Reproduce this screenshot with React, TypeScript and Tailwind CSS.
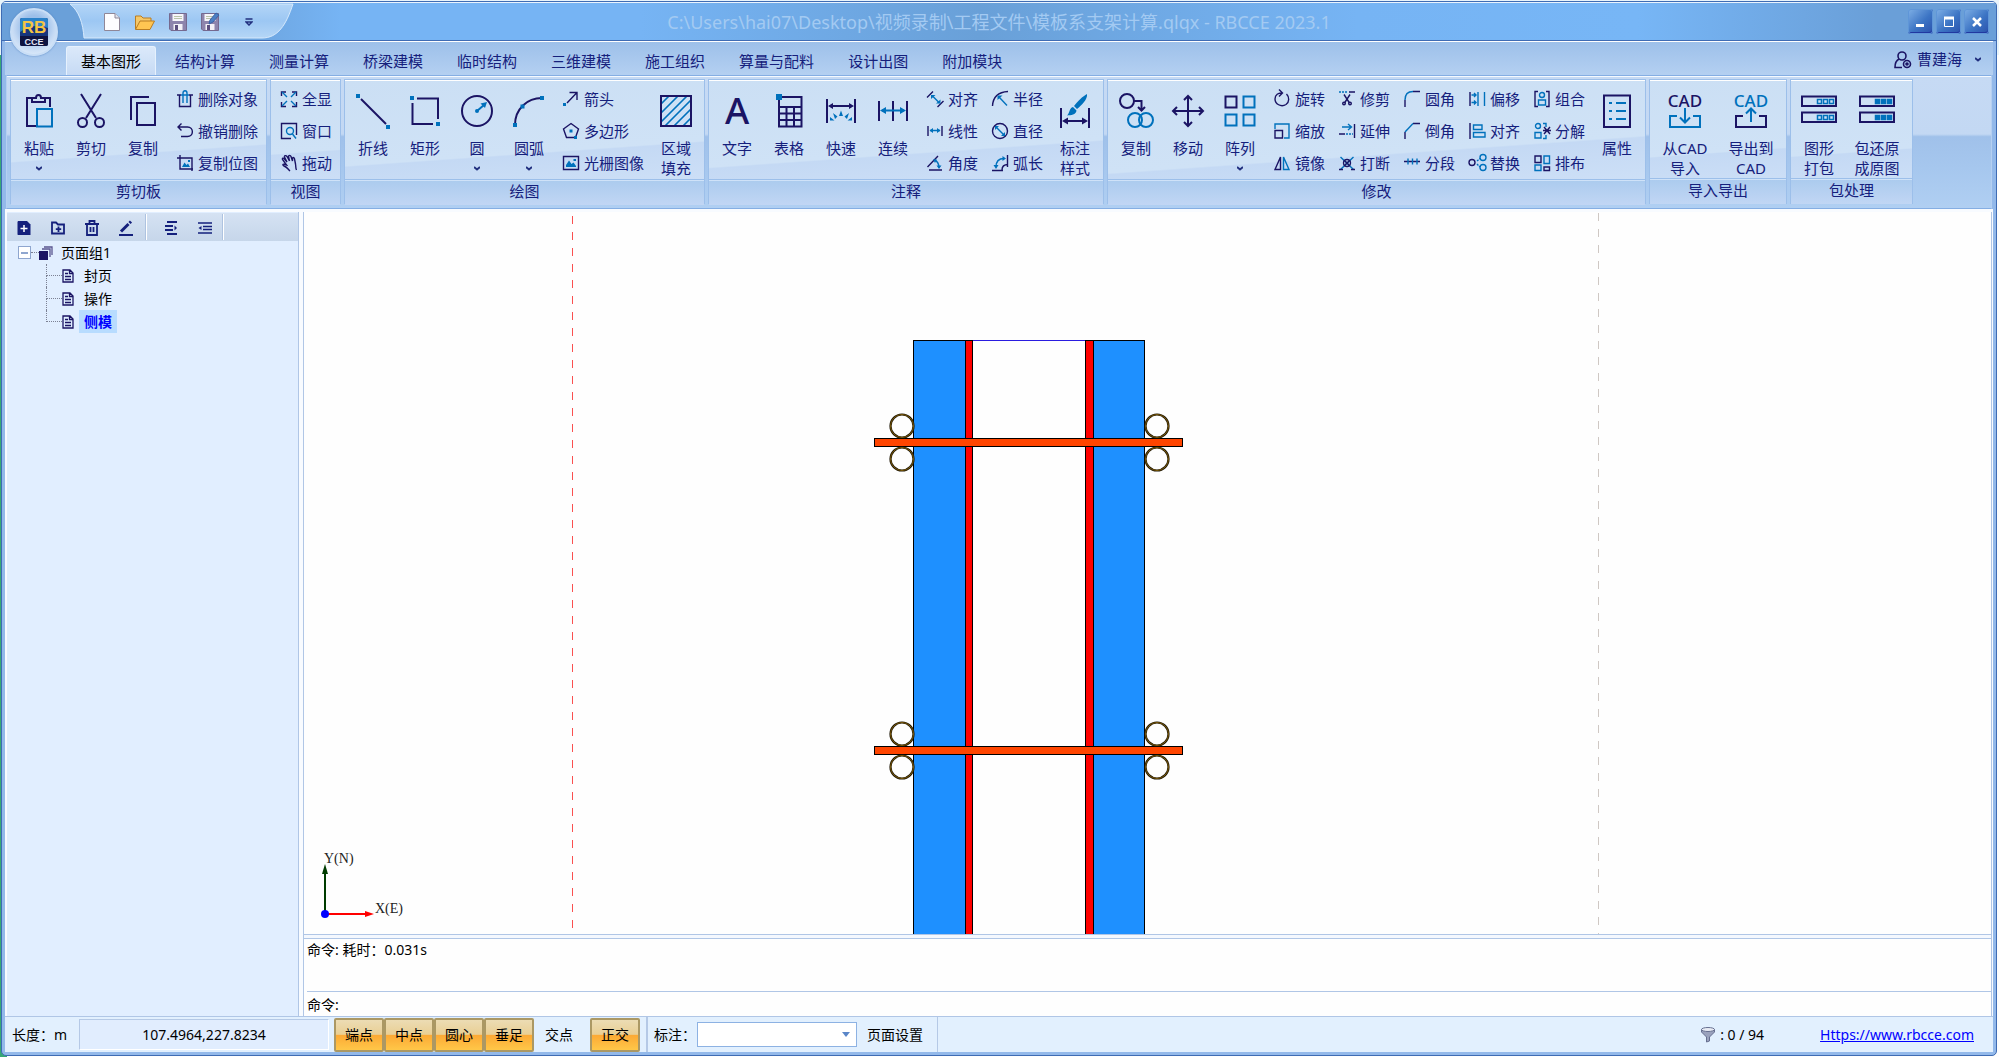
import type { ReactNode } from "react";

// shared stroke colours of the ribbon icons
const NAVY = "#1b1464";
const BLUE = "#0071bc";

/* ---------- 32px icons ---------- */

const Tray = ({ color }: { color: string }) => (
	<path d="M8 21H1V32H31V21H24" stroke={color} />
);

const Pack = ({ solid }: { solid?: boolean }) => (
	<>
		<path d="M-1 1.500H33V11H-1zM-1 17.500H33V27H-1z" />
		{[4.5, 20.5].map((y) =>
			[14.5, 20.5, 26.5].map((x) => (
				<rect
					key={`${x}-${y}`}
					x={x}
					y={y}
					width="4"
					height="4"
					stroke={BLUE}
					strokeWidth="1.5"
					fill={solid ? BLUE : "none"}
				/>
			))
		)}
	</>
);

const bigIcons: Record<string, ReactNode> = {
	paste: (
		<>
			<path d="M13 31H4V3H9M22 3H27V12M9 7V3H13C13-1 18-1 18 3H22V7Z" />
			<path d="M14 14H29V31.500H14z" stroke={BLUE} />
		</>
	),
	cut: (
		<>
			<path d="M6-1L21 23M26-1L11 23" />
			<circle cx="7.500" cy="27.500" r="4.500" />
			<circle cx="24.500" cy="27.500" r="4.500" />
		</>
	),
	copy: <path d="M4 25V2H22M10 8H28V30H10z" />,
	polyline: (
		<>
			<path d="M4 4L29 29" />
			<path d="M-1-1H3V3H-1zM29 30H33V34H29z" fill={BLUE} stroke="none" />
		</>
	),
	rect: (
		<>
			<path d="M8 3.500H29V24M3.500 8V29H24" />
			<path d="M1 1H5V5H1zM27 27H31V31H27z" fill={BLUE} stroke="none" />
		</>
	),
	circle: (
		<>
			<circle cx="16" cy="16" r="15" />
			<circle cx="16" cy="16" r="2" fill={BLUE} stroke="none" />
			<path d="M16 16L23 10" stroke={BLUE} />
			<path d="M26 7L19.500 8.500L24 13z" fill={BLUE} stroke="none" />
		</>
	),
	arc: (
		<>
			<path d="M2 30C2 14 14 3 29 3" />
			<path
				d="M0 28H4V32H0zM7.500 9.500H11.500V13.500H7.500zM27 1H31V5H27z"
				fill={BLUE}
				stroke="none"
			/>
		</>
	),
	hatch: (
		<>
			<path
				d="M1 9L9 1M1 18L18 1M1 27L27 1M5 31L31 5M14 31L31 14M23 31L31 23"
				stroke={BLUE}
				strokeWidth="1.700"
			/>
			<path d="M1 1H31V31H1z" />
		</>
	),
	text: (
		<text
			x="16"
			y="29"
			textAnchor="middle"
			fontSize="37"
			fontWeight="500"
			fill={NAVY}
			stroke="none"
		>
			A
		</text>
	),
	table: (
		<>
			<path d="M6 2H28.500V31.500H6zM6 12H28.500M6 18.500H28.500M6 25H28.500M13.500 12V31M21 12V31" />
			<path d="M3-1H9V5H3z" fill={BLUE} stroke="none" />
		</>
	),
	quick: (
		<>
			<path d="M2 4V28M30 4V28M5 11H27" />
			<path d="M3 11L8 8V14zM29 11L24 8V14z" fill={NAVY} stroke="none" />
			<path
				d="M16 15.500L18 21H14zM8 18L12.500 21.500L10 24zM24 18L19.500 21.500L22 24zM5 22L9.500 25.500H5zM27 22L22.500 25.500H27z"
				fill={BLUE}
				stroke="none"
			/>
		</>
	),
	chain: (
		<>
			<path d="M2 6V26M16 6V26M30 6V26" />
			<path d="M5 15.500H27" stroke={BLUE} />
			<path d="M3 15.500L9 12V19zM29 15.500L23 12V19z" fill={BLUE} stroke="none" />
		</>
	),
	dimStyle: (
		<>
			<path d="M2 13V33M30 13V33M5 26H27" />
			<path d="M3 26L9 22.500V29.500zM29 26L23 22.500V29.500z" fill={NAVY} stroke="none" />
			<path
				d="M28-1C29 4 22 11 18 14L15 11C18 7 24 1 28-1zM14 12L17.500 15.500C17 20 12 20 8 20.500C11 18 10 13 14 12z"
				fill={BLUE}
				stroke="none"
			/>
		</>
	),
	copyObj: (
		<>
			<circle cx="7" cy="6" r="7" />
			<path d="M14 6H21.500V15M18 12L21.500 15.500L25 12" />
			<circle cx="15" cy="25" r="7" stroke={BLUE} />
			<circle cx="26" cy="25" r="7" stroke={BLUE} />
		</>
	),
	move: (
		<path d="M16 1V31M1 16H31M12 5L16 1L20 5M12 27L16 31L20 27M5 12L1 16L5 20M27 12L31 16L27 20" />
	),
	array: (
		<>
			<path d="M1.500 1.500H12.500V12.500H1.500z" />
			<path
				d="M19.500 1.500H30.500V12.500H19.500zM1.500 19.500H12.500V30.500H1.500zM19.500 19.500H30.500V30.500H19.500z"
				stroke={BLUE}
			/>
		</>
	),
	props: (
		<>
			<path d="M3 0.500H29V32H3z" />
			<path d="M15 8H25M15 16H25M15 24H25M8 8H11M8 16H11M8 24H11" stroke={BLUE} />
		</>
	),
	cadIn: (
		<>
			<text x="16" y="12" textAnchor="middle" fontSize="17" fontWeight="500" fill={NAVY} stroke="none">
				CAD
			</text>
			<Tray color={BLUE} />
			<path d="M16 13V27M11 22.500L16 27.500L21 22.500" stroke={BLUE} />
		</>
	),
	cadOut: (
		<>
			<text x="16" y="12" textAnchor="middle" fontSize="17" fontWeight="500" fill={BLUE} stroke="none">
				CAD
			</text>
			<Tray color={NAVY} />
			<path d="M16 27V14M11 18.500L16 13.500L21 18.500" stroke={BLUE} />
		</>
	),
	pack: <Pack />,
	unpack: <Pack solid />,
};

/* ---------- 16px icons ---------- */

const smallIcons: Record<string, ReactNode> = {
	trash: (
		<>
			<path d="M0 4H4M12 4H16M2.500 4V15.500H13.500V4" />
			<path d="M6 12V2C6-1 10-1 10 2V12M4 4H12" stroke={BLUE} />
		</>
	),
	undo: <path d="M4.500 0.500L1 4L4.500 7.500M1 4H10.500C17 4 17 13.500 10.500 13.500H4" />,
	bitmap: (
		<>
			<path d="M0 3H15V16M3 0V14H16" />
			<path d="M5 12L7.500 7.500L9.500 10L11 8.500L13 12zM11 5H13V7H11z" fill={BLUE} stroke="none" />
		</>
	),
	expand: (
		<>
			<path d="M0.500 5V1H5M11 1H15.500V5M15.500 11V15.500H11M5 15.500H0.500V11" />
			<path d="M1 1L6 6M15 1L10 6M15 15L10 10M1 15L6 10" stroke={BLUE} />
		</>
	),
	window: (
		<>
			<path d="M10 15.500H0.500V0.500H15.500V12" />
			<circle cx="9" cy="8" r="3.500" stroke={BLUE} />
			<path d="M11.500 11L15 15.500" stroke={BLUE} />
		</>
	),
	hand: (
		<path d="M9 16C7 14 6 12 3 11C1 10 2 8.500 4 9.500L5.500 10L1.500 4.500C1 3 2.500 2.500 3.500 4L6 7L3.500 2C3 0.500 5 0 6 1.500L8.500 6L7.500 1.500C7.500 0 9.500 0 10 1.500L11.500 6L11.500 3.500C12 2 13.500 2.500 13.500 4L14.500 9C15 12 14.500 13 15.500 15" />
	),
	arrow: (
		<>
			<path d="M4 12L14 1.500M6.500 1.500H14V9" />
			<path d="M0 12H3V15H0z" fill={BLUE} stroke="none" />
		</>
	),
	polygon: (
		<>
			<path d="M8 0.500L15.500 6L12.500 14.500H3.500L0.500 6z" />
			<path d="M6.500 6.500H9.500V9.500H6.500zM11 13H14V16H11z" fill={BLUE} stroke="none" />
		</>
	),
	raster: (
		<>
			<path d="M0.500 1.500H15.500V14.500H0.500z" />
			<path d="M3 12V10L6 5.500L8.500 9L10.500 7.500L13 11V12zM10.500 4H13V6H10.500z" fill={BLUE} stroke="none" />
		</>
	),
	dimAligned: (
		<>
			<path d="M0 6.500L6 0.500M10.500 16L16.500 10" />
			<path d="M5 4.500L12.500 12" stroke={BLUE} />
			<path d="M4 4H8.500L4 8zM13.500 12.500H9L13.500 8.500z" fill={BLUE} stroke="none" />
		</>
	),
	dimLinear: (
		<>
			<path d="M1 3V13M15 3V13" />
			<path d="M3 7.500H13" stroke={BLUE} />
			<path d="M2.500 7.500L6 5V10zM13.500 7.500L10 5V10z" fill={BLUE} stroke="none" />
		</>
	),
	dimAngle: (
		<>
			<path d="M0.500 12L11 1M2 15H15" />
			<path d="M7.500 5C11 6.500 12 9 12 13" stroke={BLUE} />
			<path d="M6 4.500H10L8 8zM12 14L9.500 10.500H14.500z" fill={BLUE} stroke="none" />
		</>
	),
	dimRadius: (
		<>
			<path d="M0.500 15C1 6 6 1 16 0.500" />
			<path d="M7 6L15 14.500" stroke={BLUE} />
			<path d="M5.500 4.500H10.500L5.500 9z" fill={BLUE} stroke="none" />
		</>
	),
	dimDiameter: (
		<>
			<circle cx="8" cy="8" r="7.500" />
			<path d="M4.500 4.500L11.500 11.500" stroke={BLUE} />
			<path d="M3 3H7L3 7zM13 13H9L13 9z" fill={BLUE} stroke="none" />
		</>
	),
	dimArc: (
		<>
			<path d="M0 15.500H11M10 15C10 11 12 9.500 16 9.500M15.500 0V12" />
			<path d="M4 12C4 6 7 3.500 12 3.500" stroke={BLUE} />
			<path d="M4 14L1.500 10H6.500zM14 3.500L10.500 1V6z" fill={BLUE} stroke="none" />
		</>
	),
	rotate: <path d="M12.500 3C15.500 6 15.500 11 12 13.500C7 16.500 1 13 1 8C1 4 4.500 1.500 8 2M5-1.500L8.500 2L5 5.500" />,
	scale: (
		<>
			<path d="M1 6V1H15V15H10" stroke={BLUE} />
			<path d="M1 7.500H8.500V15H1z" />
		</>
	),
	mirror: (
		<>
			<path d="M6.500 2V14.500H1z" />
			<path d="M9.500 2V14.500H15z" stroke={BLUE} />
		</>
	),
	trim: (
		<>
			<path d="M0 1H8" stroke={BLUE} strokeDasharray="2 1" />
			<path d="M10 1H16M5 3.500L10.500 12M11 3.500L5.500 12" />
			<circle cx="5" cy="12.500" r="1.300" />
			<circle cx="11" cy="12.500" r="1.300" />
		</>
	),
	extend: (
		<>
			<path d="M3 4H12M9 1L12.500 4L9 7" stroke={BLUE} />
			<path d="M0 11H6M15.500 1V15" />
			<path d="M7 11H14" stroke={BLUE} strokeDasharray="2 1" />
		</>
	),
	breakAt: (
		<>
			<path d="M1.500 2L14.500 14.500M14.500 2L1.500 14.500" stroke={BLUE} />
			<circle cx="8" cy="8" r="3.500" />
			<path d="M5 5L11 11M11 5L5 11M0 14.500H4M12 14.500H16" />
		</>
	),
	fillet: (
		<>
			<path d="M1 16V9M9 0.500H16" />
			<path d="M1 9C1 3 4 0.500 9 0.500" stroke={BLUE} />
		</>
	),
	chamfer: (
		<>
			<path d="M1 16V9M9 0.500H16" />
			<path d="M1 9L9 0.500" stroke={BLUE} />
		</>
	),
	segment: (
		<>
			<path d="M0 6.500H16" />
			<path d="M4 3.500V9.500M8.500 3.500V9.500M13 3.500V9.500" stroke={BLUE} />
		</>
	),
	offset: (
		<>
			<path d="M1 1V15" />
			<path d="M9 1V15M15.500 1V15M2.500 4H7M5 2L7 4L5 6M2.500 11.500H7M5 9.500L7 11.500L5 13.500" stroke={BLUE} />
		</>
	),
	align: (
		<>
			<path d="M1 0V16" />
			<path d="M4.500 2H13V6.500H4.500zM4.500 9.500H16V14H4.500z" stroke={BLUE} />
		</>
	),
	replace: (
		<>
			<circle cx="3" cy="7.500" r="3" />
			<circle cx="14" cy="2.500" r="3" stroke={BLUE} />
			<circle cx="14" cy="12.500" r="3" stroke={BLUE} />
			<path d="M8 6L11 3.500M8 9L11 12" stroke={BLUE} strokeDasharray="2 1" />
		</>
	),
	group: (
		<>
			<path d="M4 0.500H1V15.500H4M12 0.500H15V15.500H12" />
			<circle cx="8" cy="4" r="2.500" stroke={BLUE} />
			<path d="M4.500 9H11.500V14H4.500z" stroke={BLUE} />
		</>
	),
	explode: (
		<>
			<circle cx="4" cy="3" r="2.500" stroke={BLUE} />
			<path d="M1 9.500H7V15H1zM9 0.500H12V4M12 12V15.500H9" stroke={BLUE} />
			<path d="M10 4L16 11M16 4L10 11M9 7.500H17" />
		</>
	),
	arrange: (
		<>
			<path d="M1 1H7V7.500H1zM10 12H15.500V15.500H10z" />
			<path d="M10 1H15.500V8.500H10zM1 10H7V15.500H1z" stroke={BLUE} />
		</>
	),
};

const BigIcon = ({ name }: { name: string }) => (
	<svg
		viewBox="0 0 32 32"
		className="w-8 h-8 overflow-visible"
		fill="none"
		stroke={NAVY}
		strokeWidth="2"
	>
		{bigIcons[name]}
	</svg>
);

const SmallIcon = ({ name }: { name: string }) => (
	<svg
		viewBox="0 0 16 16"
		className="w-4 h-4 overflow-visible shrink-0"
		fill="none"
		stroke={NAVY}
		strokeWidth="1.4"
	>
		{smallIcons[name]}
	</svg>
);

const Caret = () => (
	<svg viewBox="0 0 6 5" className="w-[6px] h-[5px]" fill="none" stroke="#22307f" strokeWidth="2">
		<path d="M0 1L3 3.500L6 1" />
	</svg>
);

/* ---------- ribbon ---------- */

interface BigProps {
	icon: string;
	label: string;
	second?: string;
	menu?: boolean;
	width?: string;
}

const Big: React.FC<BigProps> = ({ icon, label, second, menu, width = "w-[52px]" }) => (
	<button className={`flex flex-col items-center shrink-0 pt-[15px] leading-5 whitespace-nowrap ${width}`}>
		<BigIcon name={icon} />
		<span className="mt-[11px]">{label}</span>
		{second && <span>{second}</span>}
		{menu && (
			<span className="flex items-center h-5">
				<Caret />
			</span>
		)}
	</button>
);

const Column = ({ items }: { items: [string, string][] }) => (
	<div className="flex flex-col pt-[3px] pl-2 pr-[6px] shrink-0">
		{items.map(([icon, label]) => (
			<button key={label} className="flex items-center h-8 gap-[5px] whitespace-nowrap">
				<SmallIcon name={icon} />
				{label}
			</button>
		))}
	</div>
);

const Group: React.FC<{ title: string; width: string; children: ReactNode }> = ({
	title,
	width,
	children,
}) => (
	<section
		className={`flex flex-col shrink-0 border border-[#9cbfea] bg-[linear-gradient(176deg,#cbdff4_0%,#cfe2f6_58%,#c4d9f4_59%,#d2e3f8_100%)] shadow-[inset_0_1px_0_#ffffff] ${width}`}
	>
		<div className="flex h-[100px] pl-[2px]">{children}</div>
		<h2 className="flex items-center justify-center flex-1 pb-[2px] border-t border-[#9cbfea] bg-[linear-gradient(#abcbee,#c1d6f4)] shadow-[inset_0_1px_0_#cfe2f8]">
			{title}
		</h2>
	</section>
);

const tabs = [
	"基本图形",
	"结构计算",
	"测量计算",
	"桥梁建模",
	"临时结构",
	"三维建模",
	"施工组织",
	"算量与配料",
	"设计出图",
	"附加模块",
];

const Ribbon = () => (
	<div className="flex items-stretch gap-[3px] h-[134px] pt-[3px] pb-[4px] pl-[3px] mx-[1px] border-y border-[#85aee3] border-x border-x-[#b5d0f2] shadow-[inset_0_1px_0_#f4f9ff] bg-[linear-gradient(180deg,#c6daf4_0%,#c3d8f3_44%,#a0c1ea_46%,#a6c7ee_70%,#b0cff2_100%)] text-[#15207c] text-[15px]">
		<Group title="剪切板" width="w-[257px]">
			<Big icon="paste" label="粘贴" menu />
			<Big icon="cut" label="剪切" />
			<Big icon="copy" label="复制" />
			<Column items={[["trash", "删除对象"], ["undo", "撤销删除"], ["bitmap", "复制位图"]]} />
		</Group>
		<Group title="视图" width="w-[71px]">
			<Column items={[["expand", "全显"], ["window", "窗口"], ["hand", "拖动"]]} />
		</Group>
		<Group title="绘图" width="w-[361px]">
			<Big icon="polyline" label="折线" />
			<Big icon="rect" label="矩形" />
			<Big icon="circle" label="圆" menu />
			<Big icon="arc" label="圆弧" menu />
			<Column items={[["arrow", "箭头"], ["polygon", "多边形"], ["raster", "光栅图像"]]} />
			<Big icon="hatch" label="区域" second="填充" />
		</Group>
		<Group title="注释" width="w-[396px]">
			<Big icon="text" label="文字" />
			<Big icon="table" label="表格" />
			<Big icon="quick" label="快速" />
			<Big icon="chain" label="连续" />
			<Column items={[["dimAligned", "对齐"], ["dimLinear", "线性"], ["dimAngle", "角度"]]} />
			<Column items={[["dimRadius", "半径"], ["dimDiameter", "直径"], ["dimArc", "弧长"]]} />
			<Big icon="dimStyle" label="标注" second="样式" />
		</Group>
		<Group title="修改" width="w-[539px]">
			<Big icon="copyObj" label="复制" />
			<Big icon="move" label="移动" />
			<Big icon="array" label="阵列" menu />
			<Column items={[["rotate", "旋转"], ["scale", "缩放"], ["mirror", "镜像"]]} />
			<Column items={[["trim", "修剪"], ["extend", "延伸"], ["breakAt", "打断"]]} />
			<Column items={[["fillet", "圆角"], ["chamfer", "倒角"], ["segment", "分段"]]} />
			<Column items={[["offset", "偏移"], ["align", "对齐"], ["replace", "替换"]]} />
			<Column items={[["group", "组合"], ["explode", "分解"], ["arrange", "排布"]]} />
			<Big icon="props" label="属性" />
		</Group>
		<Group title="导入导出" width="w-[138px]">
			<Big icon="cadIn" label="从CAD" second="导入" width="w-[66px]" />
			<Big icon="cadOut" label="导出到" second="CAD" width="w-[66px]" />
		</Group>
		<Group title="包处理" width="w-[123px]">
			<Big icon="pack" label="图形" second="打包" />
			<Big icon="unpack" label="包还原" second="成原图" width="w-[64px]" />
		</Group>
	</div>
);

const TabBar = () => (
	<div className="flex items-end h-[33px] pl-[61px] pr-[10px] text-[15px] text-[#15207c] bg-[linear-gradient(#9dc0ea,#b4d0f1)]">
		<nav className="flex gap-1">
			{tabs.map((tab, i) => (
				<button
					key={tab}
					className={
						i === 0
							? "h-[29px] px-[14px] rounded-t-[3px] border border-b-0 border-[#e6f1fd] bg-[linear-gradient(#dbe9fa,#c6daf4)] text-black"
							: "h-[29px] px-[14px] border border-b-0 border-transparent"
					}
				>
					{tab}
				</button>
			))}
		</nav>
		<button className="flex items-center h-[31px] ml-auto gap-[5px] pr-[2px]">
			<svg viewBox="0 0 18 18" className="w-[18px] h-[18px]" fill="none" stroke={NAVY} strokeWidth="1.6">
				<circle cx="8" cy="5" r="4" />
				<path d="M5 8C2 9.500 1 12 1 16.500H8" />
				<circle cx="13" cy="13" r="3.500" />
				<circle cx="13" cy="13" r="1" />
			</svg>
			曹建海
			<span className="ml-2">
				<Caret />
			</span>
		</button>
	</div>
);

/* ---------- title bar ---------- */

const Disk = ({ pen }: { pen?: boolean }) => (
	<svg viewBox="0 0 18 18" className="w-[18px] h-[18px] overflow-visible">
		<path d="M0.500 0.500H17.500V17.500H2L0.500 16z" fill="#8d84ac" stroke="#75698f" />
		<path d="M3.500 1H14.500V8H3.500z" fill="#f6f5fa" />
		<path d="M5 3.500H13M5 5.500H13" stroke="#b9c3a8" />
		<path d="M4.500 11H13.500V17H4.500z" fill="#f3f1f7" />
		<path d="M6 12H9V17H6z" fill="#5c4f7f" />
		{pen && <path d="M8 11L9 7L15 0L18 2L12 9z" fill="#4c7fc4" stroke="#3a62a5" />}
	</svg>
);

const QuickAccess = () => (
	<div className="relative flex items-center h-[38px] pl-[101px] gap-[14px]">
		<svg viewBox="0 0 226 36" className="absolute top-0 left-[68px] w-[226px] h-9" fill="none">
			<defs>
				<linearGradient id="qa" x1="0" y1="0" x2="0" y2="1">
					<stop offset="0" stopColor="#b3d5f7" />
					<stop offset="0.5" stopColor="#9cc7f3" />
					<stop offset="1" stopColor="#b5d6f6" />
				</linearGradient>
			</defs>
			<path d="M0 1H223C216 22 208 35 192 35H14C13 20 9 8 0 1z" fill="url(#qa)" stroke="#d6e9fc" />
		</svg>
		<button aria-label="新建" className="relative w-[18px]">
			<svg viewBox="0 0 18 18" className="w-[18px] h-[18px]">
				<path d="M1.500 0.500H12L16.500 5V17.500H1.500z" fill="#fdfdff" stroke="#8f8798" />
				<path d="M12 0.500V5H16.500" fill="#dfe4ee" stroke="#8f8798" />
			</svg>
		</button>
		<button aria-label="打开" className="relative">
			<svg viewBox="0 0 20 18" className="w-5 h-[18px]">
				<path d="M0.500 16V3H6L8 5H16V8" fill="#f5c869" stroke="#b97c22" />
				<path d="M0.500 16.500L5 8H19.500L15 16.500z" fill="#ffc552" stroke="#b97c22" />
			</svg>
		</button>
		<button aria-label="保存" className="relative">
			<Disk />
		</button>
		<button aria-label="另存为" className="relative">
			<Disk pen />
		</button>
		<button aria-label="自定义快速访问工具栏" className="relative ml-3">
			<svg viewBox="0 0 8 8" className="w-2 h-2" fill="none" stroke="#22307f" strokeWidth="1.5">
				<path d="M0.500 1H7.500M1 4L4 7L7 4z" />
			</svg>
		</button>
	</div>
);

const winButton =
	"flex items-center justify-center w-[25px] h-[25px] rounded-[3px] bg-[linear-gradient(135deg,#7fb0e6,#3c74c4_55%,#2a50ac)] shadow-[inset_0_0_0_1px_#5f96d8,inset_-1px_-2px_0_#2138a0]";

const TitleBar = () => (
	<header className="relative h-[39px] border-b border-[#3f6cb4] bg-[linear-gradient(90deg,#6aa0d9_0%,#6aa0d9_11%,#76b4f4_17%,#76b4f4_32%,#69a0d8_49%,#76b4f4_68%,#77b6f6_82%,#6a9fd8_94%)]">
		<div className="grid grid-cols-[1fr_auto_1fr] h-full border-t border-[#e9f3fe]">
			<QuickAccess />
			<h1 className="self-center text-[18px] leading-6 text-[#a3caf2]">
				C:\Users\hai07\Desktop\视频录制\工程文件\模板系支架计算.qlqx - RBCCE 2023.1
			</h1>
			<div className="flex justify-end gap-[3px] pr-[7px] pt-[6px]">
				<button aria-label="最小化" className={winButton}>
					<svg viewBox="0 0 12 12" className="w-3 h-3">
						<path d="M1 8H9V11H1z" fill="#fff" />
					</svg>
				</button>
				<button aria-label="最大化" className={winButton}>
					<svg viewBox="0 0 12 12" className="w-3 h-3" fill="none" stroke="#fff">
						<path d="M1.500 2V10.500H10.500V2" />
						<path d="M1 2H11" strokeWidth="3" />
					</svg>
				</button>
				<button aria-label="关闭" className={winButton}>
					<svg viewBox="0 0 12 12" className="w-3 h-3" fill="none" stroke="#fff" strokeWidth="2.5">
						<path d="M2 2L10 10M10 2L2 10" />
					</svg>
				</button>
			</div>
		</div>
		{/* application button hangs over the tab row */}
		<button
			aria-label="RBCCE"
			className="absolute left-[8px] top-[6px] z-10 flex items-center justify-center w-12 h-12 rounded-full border-2 border-[#c9def6] bg-[radial-gradient(circle_at_50%_40%,#9dbfe9_35%,#c5daf4_60%,#e6f1fc_90%)] shadow-[0_0_2px_#4f7fbe]"
		>
			<svg viewBox="0 0 28 28" className="w-7 h-7 overflow-visible font-['Liberation_Sans',sans-serif]">
				<rect width="28" height="28" rx="2" fill="#17357c" />
				<path d="M0 2Q0 0 2 0H26Q28 0 28 2V10Q14 4 0 14z" fill="#2c82c9" />
				<path d="M0 18H28V26Q28 28 26 28H2Q0 28 0 26z" fill="#0f1440" />
				<text x="14" y="15" textAnchor="middle" fontSize="17" fontWeight="700" fill="#f5c542">
					RB
				</text>
				<text x="14" y="27" textAnchor="middle" fontSize="9" fontWeight="700" fill="#e3e6f5">
					CCE
				</text>
			</svg>
		</button>
	</header>
);

/* ---------- side panel ---------- */

const INK = "#15207c";

const DocIcon = () => (
	<svg viewBox="0 0 12 14" className="w-3 h-[14px] shrink-0" fill="none" stroke={NAVY} strokeWidth="1.3">
		<path d="M1 1H8L11 4V13H1zM3 4.500H6M3 7.500H9M3 10.500H9M7.500 1V4.500H11" />
	</svg>
);

const toolButton = "flex items-center justify-center w-[34px] h-7";

const SideTools = () => (
	<div className="flex h-7 pt-[1px] bg-[linear-gradient(#d5e2f3,#c6d6ea)]">
		<button aria-label="新建页面" className={toolButton}>
			<svg viewBox="0 0 14 14" className="w-[14px] h-[14px]">
				<path d="M1 0H10L13.500 3.500V14H1Q0.500 14 0.500 13V1z" fill={INK} />
				<path d="M7 4V11M3.500 7.500H10.500" stroke="#fff" strokeWidth="1.500" />
			</svg>
		</button>
		<button aria-label="新建页面组" className={toolButton}>
			<svg viewBox="0 0 14 14" className="w-[14px] h-[14px]" fill="none" stroke={INK} strokeWidth="1.800">
				<path d="M1 12.500V1.500H5L7 3.500H13V12.500zM7.500 5.500V11M4.800 8.200H10.200" />
			</svg>
		</button>
		<button aria-label="删除" className={toolButton}>
			<svg viewBox="0 0 14 16" className="w-[14px] h-4" fill="none" stroke={INK} strokeWidth="1.800">
				<path d="M0 4H14M4.500 4V1H9.500V4M2 4V15H12V4M5.500 7V12M8.500 7V12" />
			</svg>
		</button>
		<button aria-label="重命名" className={toolButton}>
			<svg viewBox="0 0 14 16" className="w-[14px] h-4" fill="none" stroke={INK}>
				<path d="M2 11.500L9.500 4" strokeWidth="3" />
				<path d="M10.500 3L12 1.500" strokeWidth="3" />
				<path d="M0 15H14" strokeWidth="1.800" />
			</svg>
		</button>
		<div className="w-[2px] mb-[1px] ml-[2px] mr-[7px] border-l border-[#aec3e0] bg-white" />
		<button aria-label="展开" className={toolButton}>
			<svg viewBox="0 0 12 14" className="w-3 h-[14px]" fill="none" stroke={INK} strokeWidth="1.800">
				<path d="M2 1H12M0 5H8M0 9H8M2 13H12" />
				<path d="M9.500 4.500L12 7L9.500 9.500z" fill={INK} stroke="none" />
			</svg>
		</button>
		<button aria-label="折叠" className={toolButton}>
			<svg viewBox="0 0 14 12" className="w-[14px] h-3" fill="none" stroke={INK}>
				<path d="M0 1H14M5 4.500H14M5 7.500H14M0 11H14" strokeWidth="1.300" />
				<path d="M3.500 4L0.500 6L3.500 8z" fill={INK} stroke="none" />
			</svg>
		</button>
		<div className="w-[2px] mb-[1px] border-l border-[#aec3e0] bg-white" />
	</div>
);

const pages = ["封页", "操作", "侧模"];

const SidePanel = () => (
	<aside className="w-[292px] shrink-0 pt-[1px] bg-[#e1eeff] border-r border-[#b0c6e6] text-sm text-black">
		<SideTools />
		<div className="flex items-center h-[23px] pl-[11px]">
			<button
				aria-label="折叠页面组"
				className="flex items-center justify-center w-[13px] h-[13px] border border-[#8fa6cf] bg-white"
			>
				<span className="w-[7px] h-[2px] bg-[#8fa6cf]" />
			</button>
			<span className="w-2 border-t border-dotted border-[#7c8194]" />
			<svg viewBox="0 0 14 14" className="w-[14px] h-[14px]">
				<path d="M5 1H13V9M3 3H11V11" fill="none" stroke="#5a5590" strokeWidth="1.300" />
				<path d="M0 5H9V14H0z" fill={NAVY} />
			</svg>
			<span className="ml-2">页面组1</span>
		</div>
		<ul>
			{pages.map((page, i) => (
				<li key={page} className="flex items-center h-[23px] pl-[39px]">
					<span className="flex flex-col self-stretch w-4">
						<span className="h-3 border-l border-b border-dotted border-[#7c8194]" />
						{i < pages.length - 1 && (
							<span className="flex-1 border-l border-dotted border-[#7c8194]" />
						)}
					</span>
					<DocIcon />
					<span
						className={
							i === 2
								? "ml-[5px] h-[23px] px-[5px] leading-[23px] font-bold text-[#0000ff] bg-[#b8dcff]"
								: "ml-[5px] h-[23px] px-[5px] leading-[23px]"
						}
					>
						{page}
					</span>
				</li>
			))}
		</ul>
	</aside>
);

/* ---------- drawing area ---------- */

const beams = [226.5, 534.5];
const pipes = [598, 853];

const Drawing = () => (
	<svg className="block w-full h-full" shapeRendering="crispEdges">
		<path d="M268.500 4V716" stroke="#fa5050" strokeDasharray="8 8" />
		<path d="M1294.500 1V723" stroke="#cfc8c4" strokeDasharray="8 8" />
		<g stroke="#000">
			<rect x="609.500" y="128.500" width="52" height="620" fill="#1e90ff" />
			<rect x="661.500" y="128.500" width="7" height="620" fill="#ff0000" />
			<rect x="781.500" y="128.500" width="8" height="620" fill="#ff0000" />
			<rect x="789.500" y="128.500" width="51" height="620" fill="#1e90ff" />
		</g>
		<path d="M669 128.500H781" stroke="#2a1ce0" />
		{beams.map((y) => (
			<g key={y}>
				<rect x="570.500" y={y} width="308" height="8" fill="#ff4500" stroke="#000" />
				{pipes.map((x) =>
					[y - 12.5, y + 20.5].map((cy) => (
						<g key={`${x}-${cy}`} shapeRendering="auto" fill="none">
							<circle cx={x} cy={cy} r="11.500" stroke="#1a1405" strokeWidth="2.200" />
							<circle cx={x} cy={cy} r="11.500" stroke="#a87808" strokeWidth="0.700" />
						</g>
					))
				)}
			</g>
		))}
		<g shapeRendering="auto">
			<path d="M21 702V660" stroke="#003c00" strokeWidth="2" />
			<path d="M21 652L24 662H18z" fill="#003c00" />
			<path d="M21 702H62" stroke="#ff0000" strokeWidth="2" />
			<path d="M70 702L61 699V705z" fill="#ff0000" />
			<circle cx="21" cy="702" r="4" fill="#0000ff" />
			<g className="font-['Liberation_Serif',serif] text-sm" fill="#222">
				<text x="20" y="651">
					Y(N)
				</text>
				<text x="71" y="701">
					X(E)
				</text>
			</g>
		</g>
	</svg>
);

const Workspace = () => (
	<main className="flex flex-col flex-1 min-w-0 ml-[4px] border-x border-[#b0c6e6] bg-[#fefefe] text-sm text-black">
		<div className="flex-1 min-h-0 overflow-hidden">
			<Drawing />
		</div>
		<div className="h-[5px] border-y border-[#b0c6e6] bg-[#f4f8fe]" />
		<output className="h-[52px] pl-[3px] leading-[22px]">命令: 耗时：0.031s</output>
		<div className="flex items-center h-[25px] ml-[3px] pt-[2px] border-t border-[#b0c6e6]">
			<label htmlFor="command">命令:</label>
			<input id="command" className="flex-1 h-5 ml-1 bg-transparent outline-none" />
		</div>
	</main>
);

/* ---------- status bar ---------- */

const Snap = ({ label, on }: { label: string; on?: boolean }) => (
	<button
		aria-pressed={!!on}
		className={
			on
				? "w-[50px] h-[34px] rounded-[2px] border-2 border-[#ab9864] bg-[linear-gradient(#ecdcb4_0%,#e9cf94_48%,#fca935_50%,#ffc748_100%)]"
				: "w-[56px] h-[34px] pr-[6px]"
		}
	>
		{label}
	</button>
);

const StatusBar = () => (
	<footer className="flex items-center h-9 text-sm text-black bg-[#e2f0fe] border-t border-[#b0c6e6]">
		<span className="w-[74px] pl-[7px]">长度：m</span>
		<span className="flex items-center justify-center w-[250px] h-[31px] mr-[5px] border border-[#b5c9e6] border-r-white border-b-white bg-[#e1edfe]">
			107.4964,227.8234
		</span>
		<Snap label="端点" on />
		<Snap label="中点" on />
		<Snap label="圆心" on />
		<Snap label="垂足" on />
		<Snap label="交点" />
		<Snap label="正交" on />
		<span className="w-[2px] h-full ml-[6px] mr-[6px] bg-[#b5c9e6]" />
		<label htmlFor="dimension">标注：</label>
		<span className="relative w-[160px] h-[25px] ml-[1px]">
			<select
				id="dimension"
				className="w-full h-full bg-white border border-[#8db2e3] appearance-none outline-none"
			/>
			<svg viewBox="0 0 8 5" className="absolute right-[7px] top-[10px] w-2 h-[5px] pointer-events-none">
				<path d="M0 0H8L4 5z" fill="#5a86c8" />
			</svg>
		</span>
		<button className="ml-[10px]">页面设置</button>
		<span className="w-[1px] h-full ml-[14px] bg-[#b5c9e6]" />
		<span className="flex items-center ml-auto mr-[56px]">
			<svg viewBox="0 0 14 16" className="w-[14px] h-4 mr-[5px]">
				<path d="M0.500 2.500V5L5.500 10V15L8.500 14V10L13.500 5V2.500z" fill="#9aa2bd" stroke="#666f90" />
				<ellipse cx="7" cy="2.500" rx="6.500" ry="2" fill="#e8ebf4" stroke="#666f90" />
			</svg>
			: 0 / 94
		</span>
		<a href="https://www.rbcce.com" className="mr-[19px] text-[#0000ff] underline">
			Https://www.rbcce.com
		</a>
	</footer>
);

const App = () => (
	<div className="h-screen p-[1px] pr-[2px] overflow-hidden bg-[linear-gradient(#e8f4fb_55px,transparent_55px),linear-gradient(90deg,#36a875_7px,#fdfdfd_7px)] font-['Noto_Sans','Noto_Sans_CJK_SC',sans-serif]">
		<div className="flex flex-col h-full border border-[#3f6cb4] rounded-[5px] overflow-hidden bg-[#93b9ea]">
			<TitleBar />
			<div className="flex flex-col flex-1 min-h-0 mx-[3px] mb-[3px]">
				<div className="border-t border-white">
					<TabBar />
					<Ribbon />
				</div>
				<div className="flex flex-1 min-h-0 pt-[3px] pl-[2px] pr-[1px] bg-[#f8fbff]">
					<SidePanel />
					<Workspace />
				</div>
				<StatusBar />
			</div>
		</div>
	</div>
);

export default App;
